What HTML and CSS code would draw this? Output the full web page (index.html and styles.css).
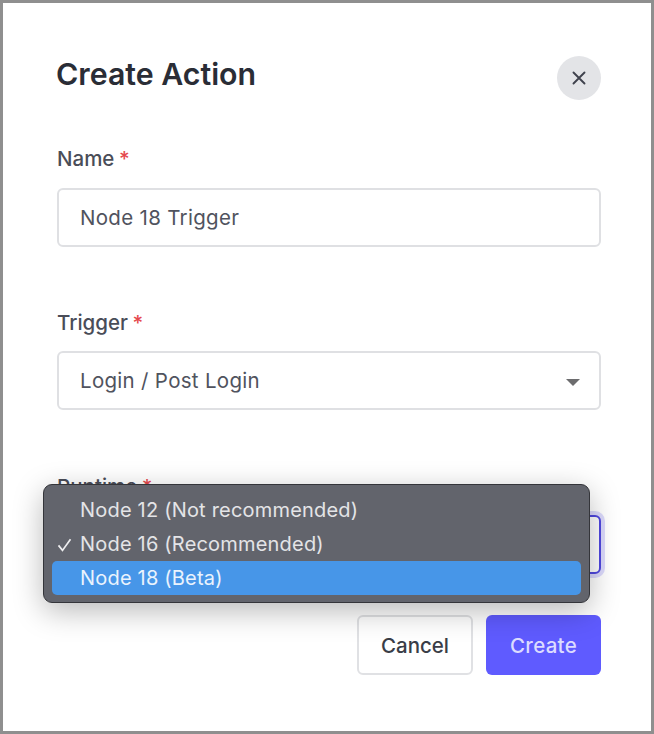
FILE: index.html
```html
<!DOCTYPE html>
<html lang="en">
<head>
    <meta charset="UTF-8">
    <meta name="viewport" content="width=device-width, initial-scale=1.0">
    <title>Create Action</title>
    <link rel="stylesheet" href="styles.css">
</head>
<body>
    <div class="modal">
        <div class="modal-header">
            <h1>Create Action</h1>
            <button class="close-btn" aria-label="Close">
                <svg width="14" height="14" viewBox="0 0 14 14"><path d="M1.5 1.5l11 11M12.5 1.5l-11 11" stroke="#3f424d" stroke-width="1.9" stroke-linecap="round" fill="none"/></svg>
            </button>
        </div>

        <div class="field field-name">
            <label>Name <span class="req">*</span></label>
            <div class="control">Node 18 Trigger</div>
        </div>

        <div class="field field-trigger">
            <label>Trigger <span class="req">*</span></label>
            <div class="control">Login / Post Login<span class="caret"></span></div>
        </div>

        <div class="field field-runtime">
            <label>Runtime <span class="req">*</span></label>
            <div class="control control-focus"><span class="caret"></span></div>
        </div>

        <div class="actions">
            <button class="btn btn-cancel">Cancel</button>
            <button class="btn btn-create">Create</button>
        </div>

        <!-- native select popup, open over the runtime field -->
        <ul class="select-menu">
            <li>Node 12 (Not recommended)</li>
            <li><svg class="check" width="16" height="14" viewBox="0 0 16 14"><path d="M1.5 7.4l4 5L13.5 1.2" stroke="#eeeef0" stroke-width="1.7" fill="none"/></svg>Node 16 (Recommended)</li>
            <li class="active">Node 18 (Beta)</li>
        </ul>
    </div>
</body>
</html>
```

FILE: styles.css
```css
* {
    box-sizing: border-box;
}
body {
    margin: 0;
    font-family: Inter, "Noto Sans", sans-serif;
    background: #fff;
}
.modal {
    position: relative;
    width: 654px;
    height: 734px;
    border: 3px solid #8f8f8f;
    padding: 53px 50px 0 54px;
    background: #fff;
    overflow: hidden;
}
.modal-header {
    display: flex;
    justify-content: space-between;
    align-items: flex-start;
    height: 58px;
}
h1 {
    margin: 0 0 0 -1px;
    font-size: 30.3px;
    line-height: 36px;
    font-weight: 600;
    color: #2a2d36;
}
.close-btn {
    display: flex;
    align-items: center;
    justify-content: center;
    width: 44px;
    height: 44px;
    border: none;
    border-radius: 50%;
    background: #e3e4e7;
    padding: 0;
}
.field {
    display: flex;
    flex-direction: column;
}
.field-name {
    margin-top: 35px;
}
.field-name label {
    margin-bottom: 19px;
}
.field-trigger {
    margin-top: 66px;
}
.field-runtime {
    margin-top: 67px;
}
label {
    height: 20px;
    margin-bottom: 18px;
    font-size: 20.5px;
    line-height: 20px;
    font-weight: 500;
    color: #4a4d58;
}
.req {
    margin-left: -1px;
    color: #e5484d;
}
.control {
    position: relative;
    display: flex;
    align-items: center;
    height: 59px;
    padding-left: 21px;
    border: 2px solid #dfe0e3;
    border-radius: 6px;
    font-size: 20.5px;
    letter-spacing: 0.3px;
    color: #50535e;
    background: #fff;
}
.control-focus {
    border-color: #5048e0;
    box-shadow: 0 0 0 4px #dcdafc;
}
.caret {
    position: absolute;
    right: 19px;
    top: 26px;
    width: 0;
    height: 0;
    border-left: 7.5px solid transparent;
    border-right: 7.5px solid transparent;
    border-top: 7px solid #6c6c6e;
}
.actions {
    display: flex;
    justify-content: flex-end;
    gap: 13px;
    margin-top: 41px;
}
.btn {
    height: 60px;
    border-radius: 6px;
    font-family: inherit;
    font-size: 20.5px;
    font-weight: 500;
    padding: 0;
}
.btn-cancel {
    width: 116px;
    border: 2px solid #e0e1e4;
    background: #fff;
    color: #3a3d47;
}
.btn-create {
    width: 115px;
    border: none;
    background: #5f5bff;
    color: #dcdcff;
    letter-spacing: 0.3px;
}
.select-menu {
    position: absolute;
    left: 40px;
    top: 481px;
    width: 547px;
    height: 119px;
    margin: 0;
    padding: 8px;
    list-style: none;
    background: #62646c;
    border: 1px solid #34353a;
    border-radius: 9px;
    box-shadow: 0 8px 30px rgba(0, 0, 0, 0.28);
}
.select-menu li {
    position: relative;
    height: 34px;
    padding-left: 28px;
    border-radius: 5px;
    font-size: 20px;
    line-height: 34px;
    color: #e4e4e7;
    letter-spacing: 0.2px;
}
.select-menu li.active {
    background: #4796e8;
    color: #eaf3fd;
}
.check {
    position: absolute;
    left: 5px;
    top: 11px;
}
```
